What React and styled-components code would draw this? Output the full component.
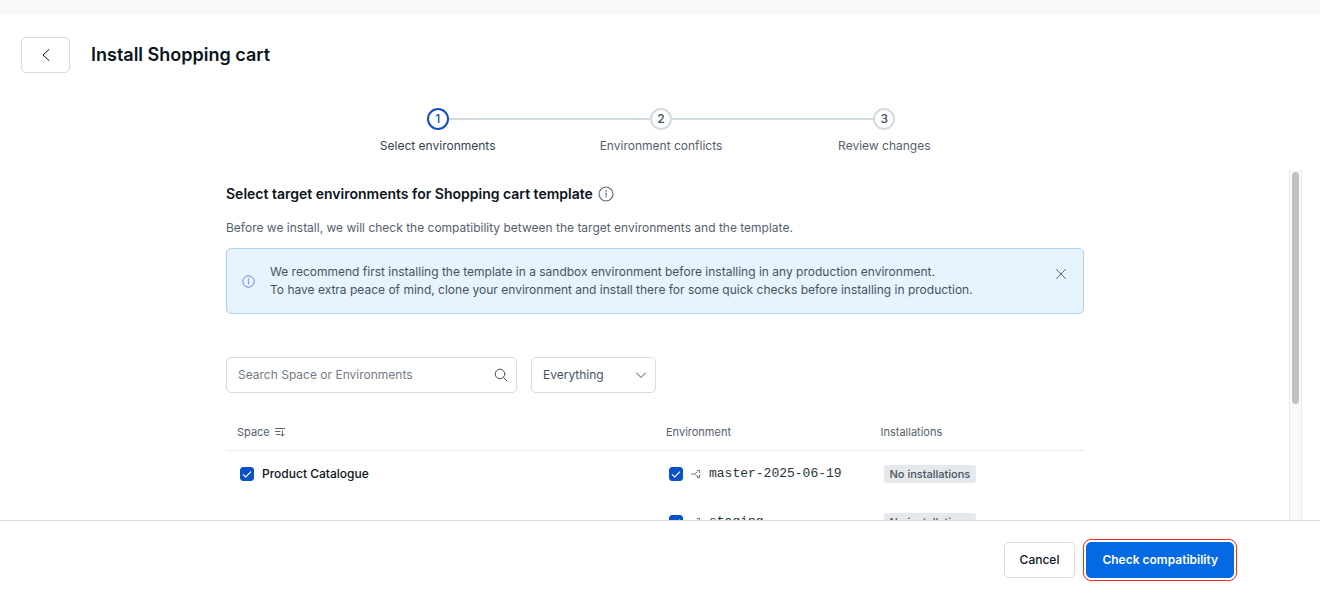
import React, { useState } from 'react';
import styled, { createGlobalStyle, css } from 'styled-components';

const GlobalStyle = createGlobalStyle`
  * {
    box-sizing: border-box;
  }

  body {
    margin: 0;
    background: #ffffff;
    color: #0c141c;
    font-family: Inter, 'Liberation Sans', sans-serif;
    font-size: 12px;
    line-height: 18px;
  }

  button,
  input,
  select {
    font: inherit;
    color: inherit;
  }
`;

const StyledPage = styled.div`
  display: flex;
  flex-direction: column;
  height: 100vh;
`;

const StyledTopBand = styled.div`
  flex: none;
  height: 15px;
  background: #f8f9fb;
`;

const StyledHeader = styled.header`
  display: flex;
  flex: none;
  align-items: center;
  gap: 21px;
  padding: 22px 22px 0 21px;
`;

const StyledButton = styled.button`
  display: inline-flex;
  align-items: center;
  justify-content: center;
  height: 36px;
  padding: 0 15px;
  border: 1px solid #d9dcde;
  border-radius: 5px;
  background: #ffffff;
  font-weight: 500;
  cursor: pointer;

  ${({ $primary }) =>
    $primary &&
    css`
      border-color: #0469e3;
      background: #0469e3;
      color: #ffffff;
      font-weight: 600;
      outline: 1px solid #ee2722;
      outline-offset: 2px;
    `}
`;

const StyledBackButton = styled(StyledButton)`
  width: 49px;
  padding: 0;
`;

const StyledTitle = styled.h1`
  margin: 0;
  font-size: 18px;
  font-weight: 600;
  line-height: 24px;
`;

const StyledSteps = styled.ol`
  display: grid;
  flex: none;
  grid-template-columns: repeat(3, 1fr);
  width: 100%;
  max-width: 672px;
  margin: 35px auto 0;
  padding: 0 0 0 2px;
  list-style: none;
`;

const StyledStep = styled.li`
  display: flex;
  flex-direction: column;
  gap: 7px;
  color: ${({ $active }) => ($active ? '#36434f' : '#56616c')};
  text-align: center;
`;

const StyledStepTrack = styled.div`
  display: flex;
  align-items: center;
`;

const StyledStepLine = styled.span`
  flex: 1;
  height: 2px;
  background: ${({ $hidden }) => ($hidden ? 'transparent' : '#d3dbe0')};
`;

const StyledStepCircle = styled.span`
  display: flex;
  align-items: center;
  justify-content: center;
  width: 22px;
  height: 22px;
  border: 2px solid ${({ $active }) => ($active ? '#1250c4' : '#d3dbe0')};
  border-radius: 50%;
  color: ${({ $active }) => ($active ? '#1250c4' : '#414d58')};
  font-weight: 500;
`;

const StyledScrollArea = styled.div`
  display: flex;
  flex: 1;
  min-height: 0;
  margin: 15px 18px 0 21px;
`;

const StyledScrollContent = styled.main`
  flex: 1;
  overflow-y: auto;
  scrollbar-width: none;
`;

const StyledScrollTrack = styled.div`
  width: 13px;
  padding: 2px;
  border: solid #ebebeb;
  border-width: 0 1px;
  background: #fafafa;
`;

const StyledScrollThumb = styled.div`
  width: 7px;
  height: 67%;
  margin: 0 auto;
  border-radius: 4px;
  background: #c1c1c1;
`;

const StyledContent = styled.div`
  max-width: 858px;
  min-height: 520px;
  margin: 0 auto;
  padding-top: 14px;
`;

const StyledHeading = styled.h2`
  display: flex;
  align-items: center;
  gap: 5px;
  margin: 0;
  font-size: 14px;
  font-weight: 600;
  line-height: 20px;
`;

const StyledIntro = styled.p`
  margin: 15px 0 11px;
  color: #56616c;
`;

const StyledNote = styled.section`
  display: flex;
  align-items: center;
  gap: 15px;
  padding: 14px 16px 14px 15px;
  border: 1px solid #a9d3f1;
  border-radius: 5px;
  background: #e7f4fe;
  color: #46535f;

  p {
    flex: 1;
    margin: 0;
  }
`;

const StyledIconButton = styled.button`
  display: flex;
  align-self: flex-start;
  padding: 5px 0;
  border: 0;
  background: none;
  color: #5a6672;
  cursor: pointer;
`;

const StyledFilters = styled.div`
  display: flex;
  gap: 14px;
  margin-top: 43px;
`;

const StyledField = styled.label`
  display: flex;
  align-items: center;
  width: ${({ $width }) => $width};
  height: 36px;
  padding: 0 8px 0 11px;
  border: 1px solid #d9dcde;
  border-radius: 5px;
  color: #46535f;

  input,
  select {
    flex: 1;
    min-width: 0;
    padding: 0;
    border: 0;
    outline: 0;
    background: none;
    appearance: none;
  }

  input::placeholder {
    color: #747c85;
    opacity: 1;
  }
`;

const StyledTable = styled.table`
  width: 100%;
  margin-top: 21px;
  border-collapse: collapse;
  table-layout: fixed;
`;

const StyledHeadCell = styled.th`
  width: ${({ $width }) => $width};
  height: 36px;
  padding: 0 11px;
  border-bottom: 1px solid #e9ebed;
  color: #56616c;
  font-size: 11px;
  font-weight: 400;
  text-align: left;
`;

const StyledCell = styled.td`
  height: 48px;
  padding: 0 14px;
`;

const StyledInline = styled.span`
  display: flex;
  align-items: center;
  gap: ${({ $gap }) => $gap};
`;

const StyledCheckLabel = styled.label`
  display: flex;
  align-items: center;
  gap: 8px;
  color: ${({ $mono }) => ($mono ? '#2b343d' : 'inherit')};
  font-size: ${({ $mono }) => ($mono ? '13px' : '12px')};
  font-weight: ${({ $mono }) => ($mono ? 400 : 500)};
  font-family: ${({ $mono }) => ($mono ? "'Liberation Mono', monospace" : 'inherit')};
`;

const StyledCheckbox = styled.span`
  display: grid;
  width: 14px;
  height: 14px;

  > * {
    grid-area: 1 / 1;
  }

  input {
    width: 14px;
    height: 14px;
    margin: 0;
    border: 1px solid #a9b3bb;
    border-radius: 3px;
    appearance: none;
  }

  input:checked {
    border-color: #0a52c7;
    background: #0a52c7;
  }

  svg {
    pointer-events: none;
  }
`;

const StyledBadge = styled.span`
  display: inline-block;
  padding: 0 6px;
  border-radius: 3px;
  background: #e5e9ec;
  color: #46535f;
  font-size: 11px;
  font-weight: 500;
  line-height: 18px;
`;

const StyledFooter = styled.footer`
  display: flex;
  flex: none;
  justify-content: flex-end;
  gap: 11px;
  padding: 21px 86px 17px 22px;
  border-top: 1px solid #dcdee0;
`;

const Icon = ({ width = 12, height = width, viewBox = '0 0 12 12', stroke = 1, children }) => (
  <svg
    width={width}
    height={height}
    viewBox={viewBox}
    fill="none"
    stroke="currentColor"
    strokeWidth={stroke}
    strokeLinecap="round"
    strokeLinejoin="round"
    aria-hidden="true"
  >
    {children}
  </svg>
);

const InfoIcon = ({ size, color }) => (
  <svg width={size} height={size} viewBox="0 0 16 16" fill="none" stroke={color} aria-hidden="true">
    <circle cx="8" cy="8" r="7" strokeWidth="1.1" />
    <path d="M7 7.2h1.2v4.2" />
    <circle cx="8" cy="4.9" r="0.8" fill={color} stroke="none" />
  </svg>
);

const BranchIcon = () => (
  <Icon width={10} viewBox="0 0 10 10">
    <path
      d="M0.5 5H3.8L6 3.2M4.6 6L7 7.8M6.4 1.4H8.6V3.6M8.6 6.2V8.6H6.4"
      stroke="#5a6672"
      strokeWidth="0.9"
    />
  </Icon>
);

const Checkbox = ({ id }) => (
  <StyledCheckbox>
    <input type="checkbox" id={id} defaultChecked />
    <svg width="14" height="14" viewBox="0 0 14 14" fill="none" stroke="#ffffff" strokeWidth="1.1">
      <path d="M3 7.4L5.7 10L11 4.6" />
    </svg>
  </StyledCheckbox>
);

const steps = ['Select environments', 'Environment conflicts', 'Review changes'];

const rows = [
  { space: 'Product Catalogue', environment: 'master-2025-06-19' },
  { environment: 'staging' },
];

const App = () => {
  const [noteVisible, setNoteVisible] = useState(true);

  return (
    <StyledPage>
      <GlobalStyle />
      <StyledTopBand />
      <StyledHeader>
        <StyledBackButton type="button" aria-label="Back">
          <Icon width={8} height={14} viewBox="0 0 8 14">
            <path d="M7 1.5L1 7l6 5.5" />
          </Icon>
        </StyledBackButton>
        <StyledTitle>Install Shopping cart</StyledTitle>
      </StyledHeader>

      <StyledSteps>
        {steps.map((step, index) => (
          <StyledStep key={step} $active={index === 0}>
            <StyledStepTrack>
              <StyledStepLine $hidden={index === 0} />
              <StyledStepCircle $active={index === 0}>{index + 1}</StyledStepCircle>
              <StyledStepLine $hidden={index === steps.length - 1} />
            </StyledStepTrack>
            {step}
          </StyledStep>
        ))}
      </StyledSteps>

      <StyledScrollArea>
        <StyledScrollContent>
          <StyledContent>
            <StyledHeading>
              Select target environments for Shopping cart template
              <InfoIcon size={16} color="#5a6672" />
            </StyledHeading>
            <StyledIntro>
              Before we install, we will check the compatibility between the target environments and
              the template.
            </StyledIntro>
            {noteVisible && (
              <StyledNote>
                <InfoIcon size={13} color="#5b74d6" />
                <p>
                  We recommend first installing the template in a sandbox environment before
                  installing in any production environment.
                  <br />
                  To have extra peace of mind, clone your environment and install there for some
                  quick checks before installing in production.
                </p>
                <StyledIconButton
                  type="button"
                  aria-label="Dismiss"
                  onClick={() => setNoteVisible(false)}
                >
                  <Icon>
                    <path d="M1.5 1.5l9 9M10.5 1.5l-9 9" />
                  </Icon>
                </StyledIconButton>
              </StyledNote>
            )}

            <StyledFilters>
              <StyledField $width="291px">
                <input
                  type="text"
                  aria-label="Search Space or Environments"
                  placeholder="Search Space or Environments"
                />
                <Icon width={14} viewBox="0 0 14 14">
                  <circle cx="6" cy="6" r="4.8" />
                  <path d="M9.6 9.6L13 13" />
                </Icon>
              </StyledField>
              <StyledField $width="125px">
                <select aria-label="Filter" defaultValue="Everything">
                  <option>Everything</option>
                </select>
                <Icon>
                  <path d="M1.5 4L6 8.5L10.5 4" />
                </Icon>
              </StyledField>
            </StyledFilters>

            <StyledTable>
              <thead>
                <tr>
                  <StyledHeadCell $width="50%">
                    <StyledInline $gap="5px">
                      Space
                      <Icon width={10} viewBox="0 0 10 10">
                        <path d="M0.5 1.5H9.5M0.5 4.5H5M1.5 7.5H5M7.5 4V9M5.9 7.4L7.5 9L9.1 7.4" />
                      </Icon>
                    </StyledInline>
                  </StyledHeadCell>
                  <StyledHeadCell $width="25%">Environment</StyledHeadCell>
                  <StyledHeadCell $width="25%">Installations</StyledHeadCell>
                </tr>
              </thead>
              <tbody>
                {rows.map(({ space, environment }) => (
                  <tr key={environment}>
                    <StyledCell>
                      {space && (
                        <StyledCheckLabel htmlFor="space">
                          <Checkbox id="space" />
                          {space}
                        </StyledCheckLabel>
                      )}
                    </StyledCell>
                    <StyledCell>
                      <StyledCheckLabel $mono htmlFor={environment}>
                        <Checkbox id={environment} />
                        <BranchIcon />
                        {environment}
                      </StyledCheckLabel>
                    </StyledCell>
                    <StyledCell>
                      <StyledBadge>No installations</StyledBadge>
                    </StyledCell>
                  </tr>
                ))}
              </tbody>
            </StyledTable>
          </StyledContent>
        </StyledScrollContent>
        <StyledScrollTrack>
          <StyledScrollThumb />
        </StyledScrollTrack>
      </StyledScrollArea>

      <StyledFooter>
        <StyledButton type="button">Cancel</StyledButton>
        <StyledButton type="button" $primary>
          Check compatibility
        </StyledButton>
      </StyledFooter>
    </StyledPage>
  );
};

export default App;
